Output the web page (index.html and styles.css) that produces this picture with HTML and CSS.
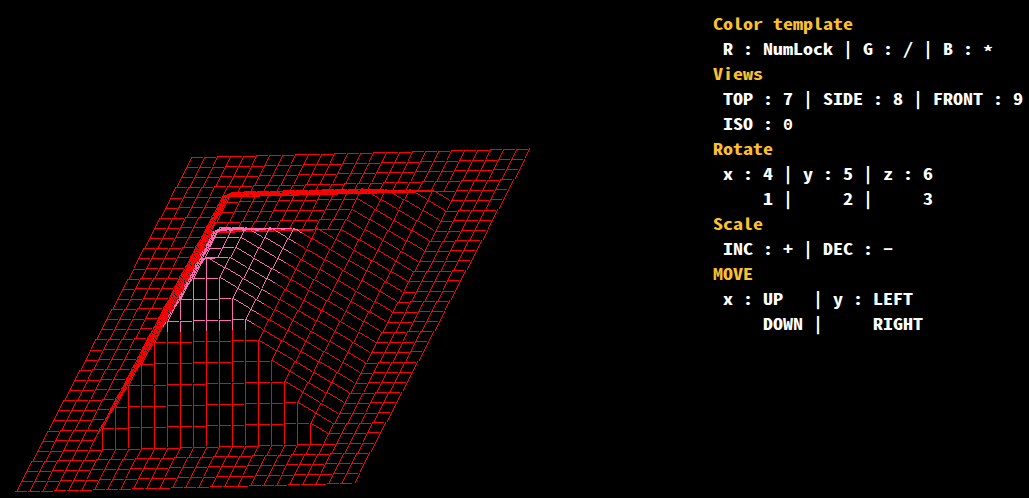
FILE: index.html
```html
<!DOCTYPE html>
<html lang="en">
<head>
<meta charset="utf-8">
<title>Wireframe viewer</title>
<link rel="stylesheet" href="styles.css">
</head>
<body>
<main class="viewer">
<canvas class="scene" id="scene" width="700" height="498"></canvas>
<aside class="help">
<h2 class="title">Color template</h2>
<pre class="keys"> R : NumLock | G : / | B : <span class="star">*</span></pre>
<h2 class="title">Views</h2>
<pre class="keys"> TOP : 7 | SIDE : 8 | FRONT : 9
 ISO : <span class="alt">0</span></pre>
<h2 class="title">Rotate</h2>
<pre class="keys"> x : 4 | y : 5 | z : 6
     1 |     2 |     3</pre>
<h2 class="title">Scale</h2>
<pre class="keys"> INC : + | DEC : <span class="alt">−</span></pre>
<h2 class="title">MOVE</h2>
<pre class="keys"> x : UP   | y : LEFT
     DOWN |     RIGHT</pre>
</aside>
</main>
<script src="scene.js"></script>
</body>
</html>
```
FILE: styles.css
```css
body {
  margin: 0;
  background: #000;
  overflow: hidden;
}
.viewer {
  display: flex;
  height: 498px;
}
.scene {
  display: block;
  flex: none;
}
.help {
  box-sizing: border-box;
  width: 263px;
  padding: 11px 0 0 10.4px;
  transform: translateY(0.4px) scaleX(1.25);
  transform-origin: 0 0;
}
.title,
.keys {
  margin: 0;
  font-family: "Noto Sans Mono CJK SC", "Noto Sans Mono CJK JP", "Liberation Mono", monospace;
  font-size: 16px;
  line-height: 25px;
  font-weight: 700;
  color: #fff;
}
.title {
  color: #fdc02f;
}
.star {
  line-height: 0;
  vertical-align: -3px;
}
.alt {
  display: inline-block;
  font-family: "Liberation Mono", monospace;
  font-size: 13.33px;
  line-height: 0;
  transform: translateY(-1px) scaleY(1.3);
}
```
FILE: scene.js
```js
const COLS = 26;
const ROWS = 33;
const BACK = [0, 1, 2, 3, 4, 4, 4, 4, 4, 5, 6, 7, 8, 8, 8, 8, 9];
const ctx = document.getElementById('scene').getContext('2d');

// Height of a grid point: the terraced back profile limited by the other sides
function height(c, r) {
  const back = r < 4 ? 0 : (BACK[r - 4] ?? 9);
  return Math.max(0, Math.min(back, 29 - r, c - 4, 22 - c));
}

function project(c, r) {
  const h = height(c, r);
  return {
    x: 191.97 + 12.997 * c - 5.333 * r - 5.333 * h,
    y: 157.6 - 0.332 * c + 10.13 * r - 10.98 * h,
    h
  };
}

function line(a, b) {
  const x = Math.floor(a.x);
  const y = Math.floor(a.y);
  const dx = b.x - a.x;
  const dy = b.y - a.y;
  const steps = Math.floor(Math.max(Math.abs(dx), Math.abs(dy)));
  for (let i = 0; i < steps; i++) {
    const t = i / steps;
    ctx.fillStyle = a.h + (b.h - a.h) * t > 5.5 ? '#ff69b4' : '#ff0000';
    ctx.fillRect(x + Math.trunc(dx * t), y + Math.trunc(dy * t), 1, 1);
  }
}

for (let r = 0; r <= ROWS; r++) {
  for (let c = 0; c <= COLS; c++) {
    const p = project(c, r);
    if (c < COLS) line(p, project(c + 1, r));
    if (r < ROWS) line(p, project(c, r + 1));
  }
}
```
